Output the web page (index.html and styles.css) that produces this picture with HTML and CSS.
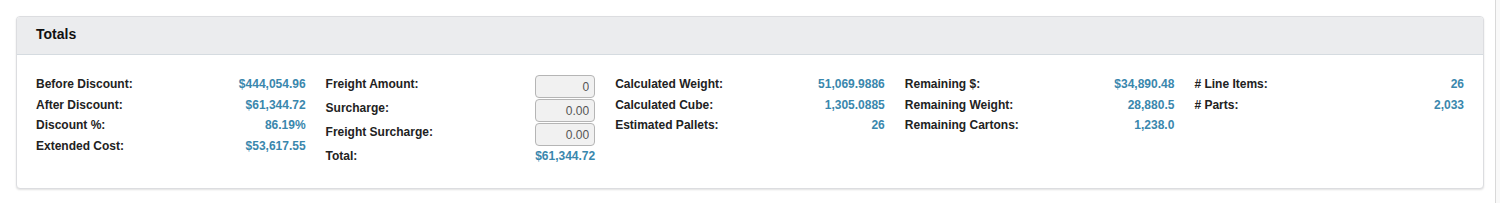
FILE: index.html
```html
<!DOCTYPE html>
<html>
<head>
<meta charset="utf-8" />
<title>Totals</title>
<link rel="stylesheet" href="styles.css">
</head>
<body>
<div class="page">
<div class="panel">
<div class="panel_head">Totals</div>
<div class="panel_body">
<div class="col">
<div class="row"><span class="lbl">Before Discount:</span><span class="val">$444,054.96</span></div>
<div class="row"><span class="lbl">After Discount:</span><span class="val">$61,344.72</span></div>
<div class="row"><span class="lbl">Discount %:</span><span class="val">86.19%</span></div>
<div class="row"><span class="lbl">Extended Cost:</span><span class="val">$53,617.55</span></div>
</div>
<div class="col">
<div class="row row_input"><span class="lbl">Freight Amount:</span><input type="text" value="0" /></div>
<div class="row row_input"><span class="lbl">Surcharge:</span><input type="text" value="0.00" /></div>
<div class="row row_input"><span class="lbl">Freight Surcharge:</span><input type="text" value="0.00" /></div>
<div class="row"><span class="lbl">Total:</span><span class="val">$61,344.72</span></div>
</div>
<div class="col">
<div class="row"><span class="lbl">Calculated Weight:</span><span class="val">51,069.9886</span></div>
<div class="row"><span class="lbl">Calculated Cube:</span><span class="val">1,305.0885</span></div>
<div class="row"><span class="lbl">Estimated Pallets:</span><span class="val">26</span></div>
</div>
<div class="col">
<div class="row"><span class="lbl">Remaining $:</span><span class="val">$34,890.48</span></div>
<div class="row"><span class="lbl">Remaining Weight:</span><span class="val">28,880.5</span></div>
<div class="row"><span class="lbl">Remaining Cartons:</span><span class="val">1,238.0</span></div>
</div>
<div class="col">
<div class="row"><span class="lbl"># Line Items:</span><span class="val">26</span></div>
<div class="row"><span class="lbl"># Parts:</span><span class="val">2,033</span></div>
</div>
</div>
</div>
</div>
<div class="edge"></div>
</body>
</html>
```
FILE: styles.css
```css
html, body { height: 100%; }
body {
margin: 0;
display: flex;
background: #fff;
font-family: "Liberation Sans", Arial, sans-serif;
font-size: 12px;
color: #222; }
.page {
flex: 1;
padding: 16px 11px 0 16px; }
.edge {
width: 4px;
border-left: 1px solid #d9d9d9;
background: #f9f9f9; }
.panel {
border: 1px solid #dcdde0;
border-radius: 4px;
background: #fff;
box-shadow: 0 1px 2px rgba(0, 0, 0, 0.12);
overflow: hidden; }
.panel_head {
height: 37px;
line-height: 35px;
padding: 0 19px;
background: #ebecee;
border-bottom: 1px solid #d5dbe0;
font-size: 14px;
font-weight: bold;
color: #111; }
.panel_body {
display: grid;
grid-template-columns: repeat(5, 1fr);
column-gap: 20px;
padding: 20px 19px 20px 19px; }
.row {
display: flex;
justify-content: space-between;
align-items: flex-start;
height: 20.67px;
line-height: 19px; }
.row_input { height: 24px; }
.lbl { font-weight: bold; }
.val {
font-weight: bold;
color: #3a87ad; }
input {
box-sizing: border-box;
width: 60px;
height: 23px;
padding: 2px 5px;
border: 1px solid #b5b5b5;
border-radius: 4px;
background: #f1f1f1;
color: #555;
font-family: "Liberation Sans", Arial, sans-serif;
font-size: 12px;
text-align: right;
outline: none; }
```
